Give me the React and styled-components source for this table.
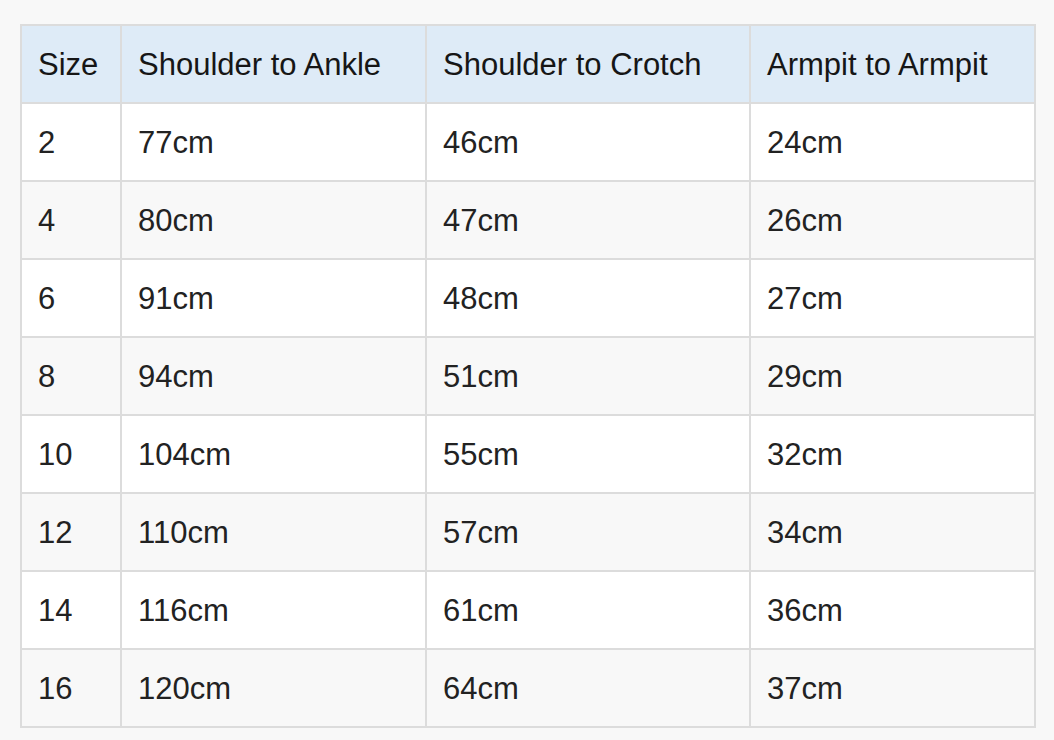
import React from "react";
import styled, { createGlobalStyle } from "styled-components";

const Global = createGlobalStyle`
  html, body { margin: 0; padding: 0; background: #f8f8f8; }
  body { font-family: "Liberation Sans", Arial, Helvetica, sans-serif; color: #1b1b1b; }
`;

const Page = styled.div`
  padding: 24px 18px 0 20px;
  background: #f8f8f8;
  min-height: 740px;
  box-sizing: border-box;
`;

const Table = styled.table`
  border-collapse: collapse;
  table-layout: fixed;
  width: 1016px;
  font-size: 31px;
`;

const Th = styled.th`
  background: #deebf7;
  border: 2px solid #dcdcdc;
  padding: 22px 16px 20px;
  line-height: 34px;
  font-weight: 400;
  text-align: left;
  color: #161616;
  white-space: nowrap;
`;

const Row = styled.tr`
  background: ${(p) => (p.$striped ? "#f8f8f8" : "#ffffff")};
`;

const Td = styled.td`
  border: 2px solid #dcdcdc;
  padding: 22px 16px 20px 16px;
  line-height: 34px;
  color: #222222;
  white-space: nowrap;
`;

const Note = styled.p`
  margin: 10px 0 0 2px;
  font-size: 31px;
  line-height: 34px;
  color: #444;
`;

const headers = ["Size", "Shoulder to Ankle", "Shoulder to Crotch", "Armpit to Armpit"];
const widths = [100, 305, 324, 285];
const rows = [
  ["2", "77cm", "46cm", "24cm"],
  ["4", "80cm", "47cm", "26cm"],
  ["6", "91cm", "48cm", "27cm"],
  ["8", "94cm", "51cm", "29cm"],
  ["10", "104cm", "55cm", "32cm"],
  ["12", "110cm", "57cm", "34cm"],
  ["14", "116cm", "61cm", "36cm"],
  ["16", "120cm", "64cm", "37cm"],
];

export default function App() {
  return (
    <>
      <Global />
      <Page>
        <Table>
          <colgroup>
            {widths.map((w, i) => (
              <col key={i} style={{ width: w }} />
            ))}
          </colgroup>
          <thead>
            <tr>
              {headers.map((h) => (
                <Th key={h}>{h}</Th>
              ))}
            </tr>
          </thead>
          <tbody>
            {rows.map((r, i) => (
              <Row key={r[0]} $striped={i % 2 === 1}>
                {r.map((c, j) => (
                  <Td key={j}>{c}</Td>
                ))}
              </Row>
            ))}
          </tbody>
        </Table>
        <Note>Tall</Note>
      </Page>
    </>
  );
}
